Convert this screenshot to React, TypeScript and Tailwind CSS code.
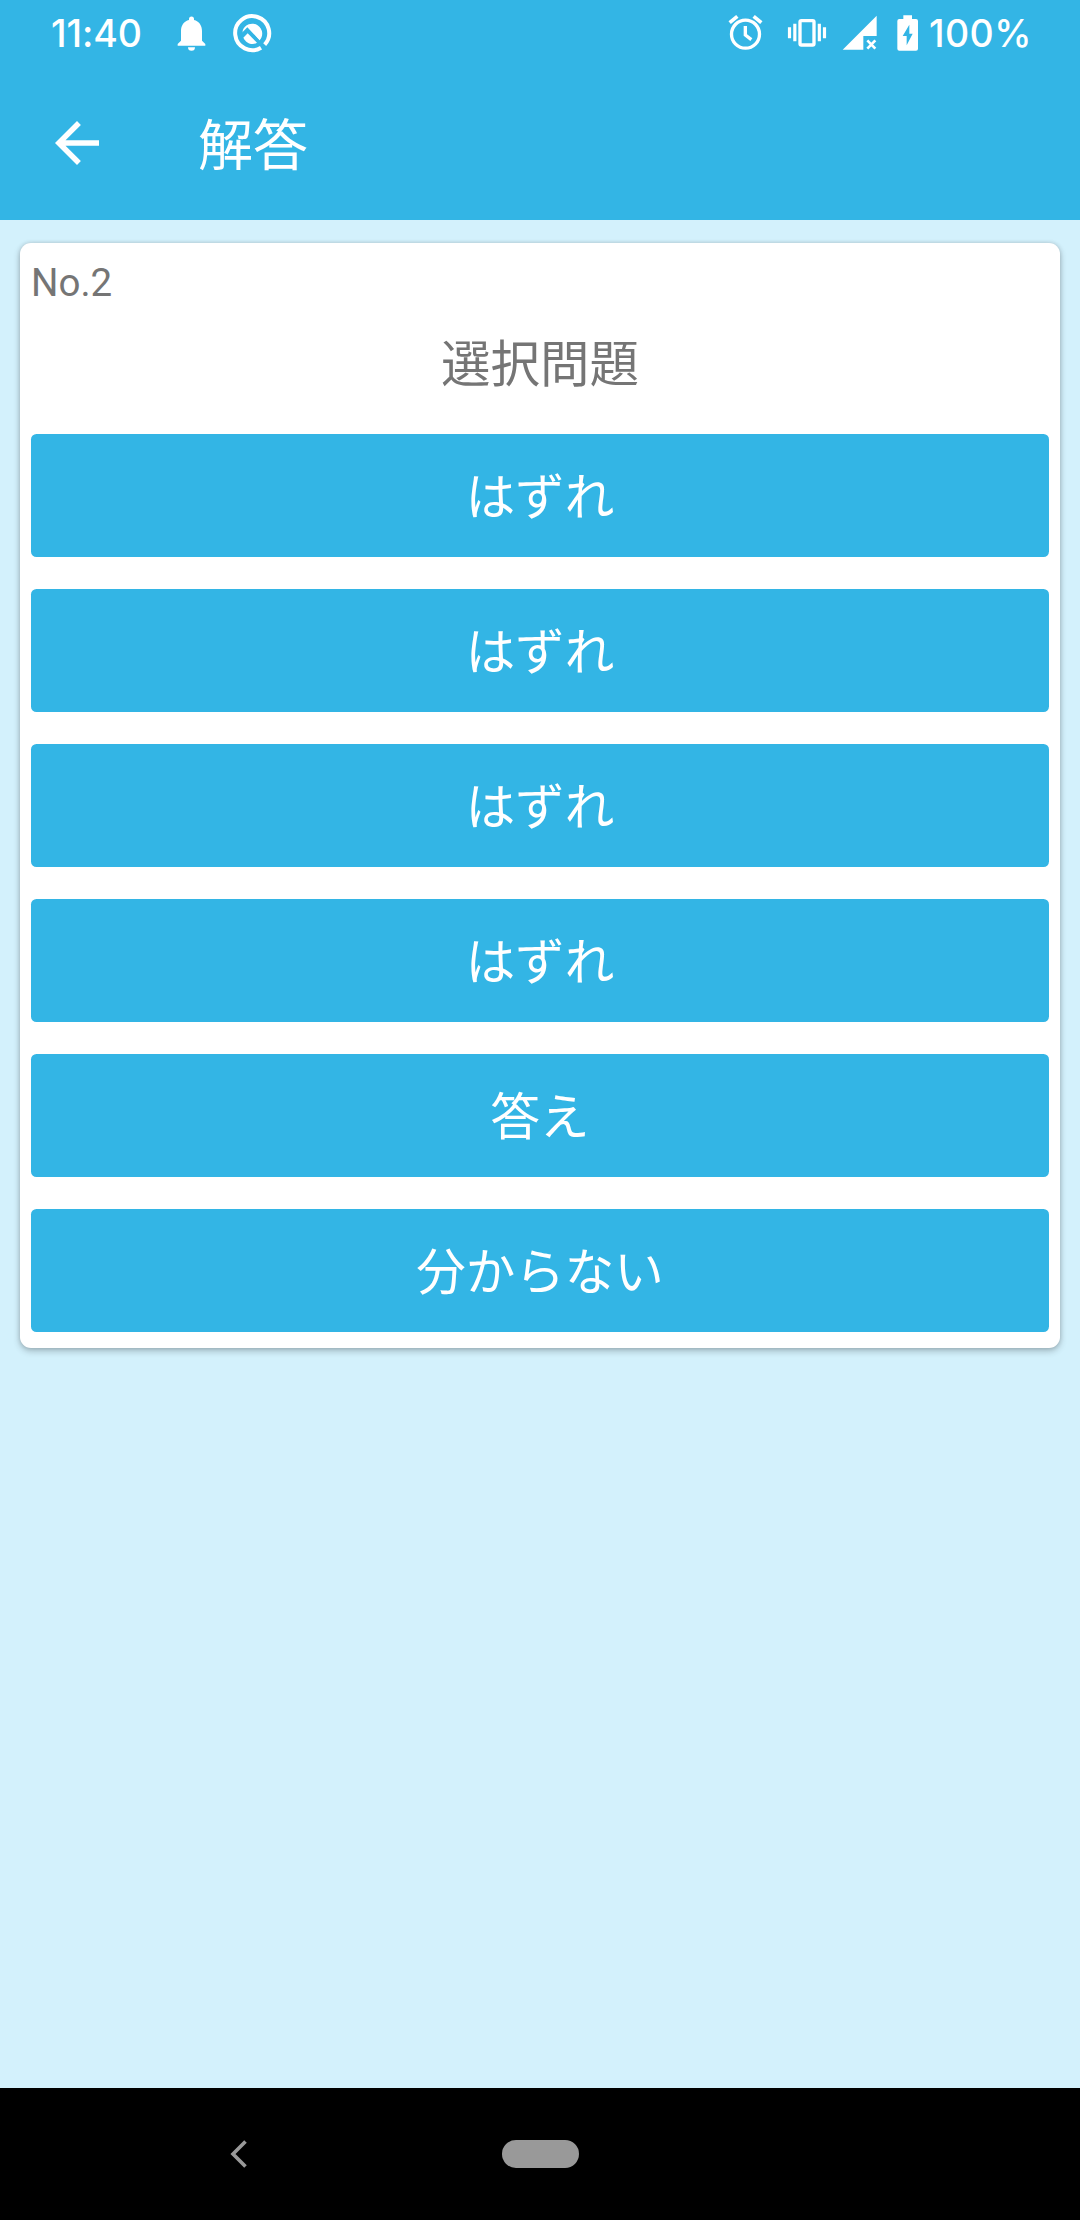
import React from "react";

const choices = ["はずれ", "はずれ", "はずれ", "はずれ", "答え", "分からない"];

function BellIcon() {
  return (
    <svg className="ml-auto h-[70px] w-[29px]" viewBox="441 0 87 210" fill="currentColor">
      <path d="M443 137v-5l10-10V93c0-17 9-29 24-33v-3a7.500 7.500 0 0 1 15 0v3c15 4 24 16 24 33v29l10 10v5z" />
      <path d="M474 142h21a10.500 10.500 0 0 1-21 0z" />
    </svg>
  );
}

function BadgeIcon() {
  return (
    <svg className="h-[70px] w-[40px]" viewBox="606 0 120 210" fill="none">
      <path d="M693 143A51 51 0 1 1 704 134" stroke="currentColor" strokeWidth="12" />
      <path d="M638 92a30 30 0 1 1 49 31l-28-28-7-8-14 14z" fill="currentColor" />
      <path d="M640 113l13-13 28 28c-12 8-31 5-41-15z" fill="currentColor" />
      <path d="M633 106l19-19 57 61" stroke="#33b5e5" strokeWidth="7" />
      <path d="M670 107l32 36" stroke="#33b5e5" strokeWidth="8" />
    </svg>
  );
}

function AlarmIcon() {
  return (
    <svg className="h-[70px] w-[35px]" viewBox="54 0 105 210" fill="none" stroke="currentColor">
      <circle cx="106.500" cy="102.500" r="42" strokeWidth="10" />
      <path d="M59 68l23-19M154 68l-23-19" strokeWidth="11" />
      <path d="M106 78v27l18 14" strokeWidth="10" />
    </svg>
  );
}

function VibrateIcon() {
  return (
    <svg className="h-[70px] w-[40px]" viewBox="231 0 120 210" fill="none" stroke="currentColor">
      <rect x="270" y="62" width="42" height="73" rx="4" strokeWidth="10" />
      <path d="M238.500 82v33M254.500 71v53M328 71v53M343.500 82v33" strokeWidth="9.500" />
    </svg>
  );
}

function SignalIcon() {
  return (
    <svg className="h-[70px] w-[36px]" viewBox="396 0 108 210" fill="currentColor">
      <path d="M398 149L500 47v61h-40v41z" />
      <path d="M472 121l24 25M496 121l-24 25" stroke="currentColor" strokeWidth="8" />
    </svg>
  );
}

function BatteryIcon() {
  return (
    <svg className="h-[70px] w-[23px]" viewBox="558 0 69 210">
      <path
        fill="currentColor"
        fillRule="evenodd"
        d="M580 46h26v11h12q6 0 6 6v83q0 6-6 6h-50q-6 0-6-6V63q0-6 6-6h12zM598 74l-20 34h12v28l18-35h-10z"
      />
    </svg>
  );
}

function StatusBar() {
  return (
    <div className="flex h-[70px] items-center text-white">
      <div className="ml-[51px] flex w-[221px] items-center">
        <span className="w-[92px] pb-[2px] font-['Inter'] text-[37.5px] leading-[66px] font-medium tracking-[-0.1px] whitespace-nowrap">
          11:40
        </span>
        <BellIcon />
        <div className="w-[26px]" />
        <BadgeIcon />
      </div>
      <div className="ml-auto flex items-center pr-[50px]">
        <AlarmIcon />
        <div className="w-[24px]" />
        <VibrateIcon />
        <div className="w-[15px]" />
        <SignalIcon />
        <div className="w-[18px]" />
        <BatteryIcon />
        <span className="ml-[10px] w-[101px] pb-[2px] font-['Inter'] text-[37.5px] leading-[66px] font-medium tracking-[0.4px] whitespace-nowrap">
          100%
        </span>
      </div>
    </div>
  );
}

export default function App() {
  return (
    <div className="flex h-[2220px] w-[1080px] flex-col overflow-hidden bg-[#d3f1fc] font-['Roboto','Noto_Sans_CJK_JP',sans-serif]">
      <header className="h-[220px] shrink-0 bg-[#33b5e5] text-white">
        <StatusBar />
        <div className="flex h-[146px] items-center pl-[44px]">
          <svg className="size-[66px]" viewBox="0 0 24 24" fill="currentColor">
            <path d="M20 11H7.830l5.590-5.590L12 4l-8 8 8 8 1.410-1.410L7.830 13H20v-2z" />
          </svg>
          <h1 className="ml-[88px] pt-[6px] text-[55px] leading-[80px] font-normal">解答</h1>
        </div>
      </header>

      <main className="flex-1 px-5 pt-[23px]">
        <section className="h-[1105px] rounded-[11px] bg-white px-[11px] pt-3 shadow-[0_3px_7px_rgba(0,0,0,0.24),0_0_4px_rgba(0,0,0,0.14)]">
          <p className="h-[56px] text-[38.5px] leading-[56px] text-[#757575]">No.2</p>
          <h2 className="h-[123px] text-center text-[49.5px] leading-[108px] font-normal text-[#757575]">
            選択問題
          </h2>
          <div className="flex flex-col gap-8">
            {choices.map((label, i) => (
              <button
                key={i}
                className="flex h-[123px] items-center justify-center rounded-[5.500px] bg-[#33b5e5] pt-1 text-[49.5px] leading-[72px] text-white"
              >
                {label}
              </button>
            ))}
          </div>
        </section>
      </main>

      <nav className="flex h-[132px] shrink-0 items-center bg-black text-[#999999]">
        <svg className="ml-[230px] h-[28px] w-[18px]" viewBox="0 0 18 28" fill="none">
          <path d="M15.500 1.500L3 14l12.500 12.500" stroke="currentColor" strokeWidth="3.600" />
        </svg>
        <div className="ml-[254px] h-[28px] w-[77px] rounded-full bg-[#999999]" />
      </nav>
    </div>
  );
}
